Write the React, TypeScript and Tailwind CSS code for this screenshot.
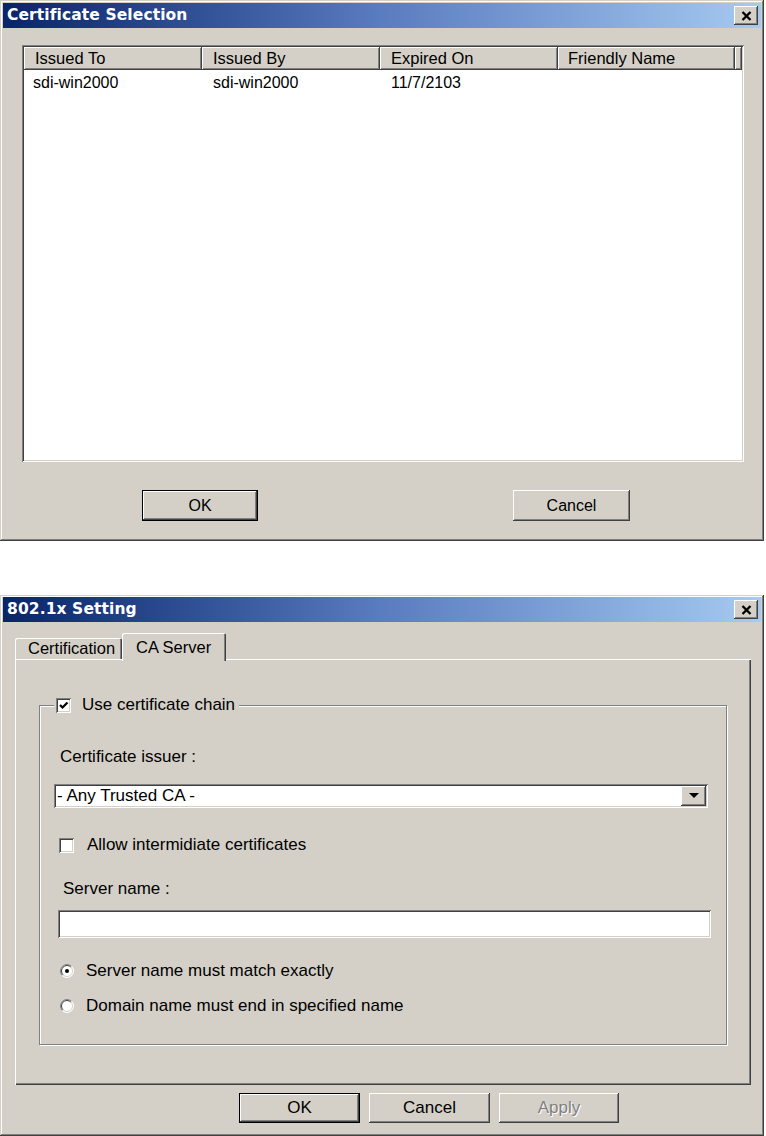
import React from "react";

const RAISED =
  "shadow-[inset_-1px_-1px_0_#404040,inset_1px_1px_0_#ffffff,inset_-2px_-2px_0_#808080,inset_2px_2px_0_#d4d0c8]";
const SUNKEN =
  "shadow-[inset_1px_1px_0_#808080,inset_-1px_-1px_0_#ffffff,inset_2px_2px_0_#404040,inset_-2px_-2px_0_#d4d0c8]";
const WINDOW =
  "shadow-[inset_-1px_-1px_0_#404040,inset_1px_1px_0_#d4d0c8,inset_-2px_-2px_0_#808080,inset_2px_2px_0_#ffffff]";

function CloseX() {
  return (
    <svg width="11" height="10" viewBox="0 0 11 10">
      <path d="M1.5 1 L9.5 9 M9.5 1 L1.5 9" stroke="#000" strokeWidth="2.4" fill="none" />
    </svg>
  );
}

function TitleBar({ title }: { title: string }) {
  return (
    <div className="h-[25px] flex items-center justify-between bg-linear-to-r from-[#0a246a] via-[#5a7cc0] to-[#a6caf0] pl-[4px] pr-[3px]">
      <span className="text-white font-bold text-[15.5px] leading-none font-['DejaVu_Sans',sans-serif] tracking-[0.1px]">
        {title}
      </span>
      <div className={`w-[24px] h-[19px] bg-[#d4d0c8] flex items-center justify-center ${RAISED}`}>
        <CloseX />
      </div>
    </div>
  );
}

function Button({
  label,
  w,
  h,
  def,
  disabled,
}: {
  label: string;
  w: string;
  h: string;
  def?: boolean;
  disabled?: boolean;
}) {
  const inner = (
    <div
      className={`w-full h-full bg-[#d4d0c8] flex items-center justify-center ${RAISED} ${
        disabled ? "text-[#808080] [text-shadow:1px_1px_0_#ffffff]" : "text-black"
      }`}
    >
      {label}
    </div>
  );
  return (
    <div className={`${w} ${h} ${def ? "border border-black" : ""}`}>{inner}</div>
  );
}

function CheckBox({ checked }: { checked?: boolean }) {
  return (
    <div className={`w-[15px] h-[15px] bg-white flex items-center justify-center ${SUNKEN}`}>
      {checked && (
        <svg width="11" height="11" viewBox="0 0 11 11">
          <path d="M2 5 L4.5 7.5 L9.5 2.5" stroke="#000" strokeWidth="2.2" fill="none" />
        </svg>
      )}
    </div>
  );
}

function Radio({ checked }: { checked?: boolean }) {
  return (
    <svg width="14" height="14" viewBox="0 0 14 14">
      <circle cx="7" cy="7" r="6.5" fill="#ffffff" />
      <path d="M2.4 11.6 A6.5 6.5 0 0 1 11.6 2.4" stroke="#808080" strokeWidth="1" fill="none" />
      <path d="M3.1 10.9 A5.5 5.5 0 0 1 10.9 3.1" stroke="#404040" strokeWidth="1" fill="none" />
      <path d="M11.6 2.4 A6.5 6.5 0 0 1 2.4 11.6" stroke="#ffffff" strokeWidth="1" fill="none" />
      <path d="M10.9 3.1 A5.5 5.5 0 0 1 3.1 10.9" stroke="#d4d0c8" strokeWidth="1" fill="none" />
      {checked && <circle cx="7" cy="7" r="2" fill="#000" />}
    </svg>
  );
}

function HeaderCell({ label, w, pl }: { label: string; w: string; pl: string }) {
  return (
    <div className={`${w} h-full bg-[#d4d0c8] flex items-center ${pl} ${RAISED}`}>
      <span>{label}</span>
    </div>
  );
}

function CertificateSelection() {
  return (
    <div
      className={`w-[764px] h-[541px] bg-[#d4d0c8] p-[3px] flex flex-col font-['Liberation_Sans',Arial,sans-serif] text-[16px] text-black ${WINDOW}`}
    >
      <TitleBar title="Certificate Selection" />
      <div className={`mt-[17px] ml-[19px] w-[722px] h-[417px] bg-white p-[2px] flex flex-col ${SUNKEN}`}>
        <div className="h-[23px] flex shrink-0 text-[16.5px]">
          <HeaderCell label="Issued To" w="w-[178px]" pl="pl-[11px]" />
          <HeaderCell label="Issued By" w="w-[178px]" pl="pl-[11px]" />
          <HeaderCell label="Expired On" w="w-[178px]" pl="pl-[11px]" />
          <HeaderCell label="Friendly Name" w="w-[177px]" pl="pl-[10px]" />
          <div className={`flex-1 h-full bg-[#d4d0c8] ${RAISED}`} />
        </div>
        <div className="h-[26px] flex items-center">
          <div className="w-[178px] pl-[9px]">sdi-win2000</div>
          <div className="w-[178px] pl-[11px]">sdi-win2000</div>
          <div className="w-[178px] pl-[11px]">11/7/2103</div>
          <div className="w-[177px]" />
        </div>
      </div>
      <div className="flex mt-[28px]">
        <div className="ml-[139px]">
          <Button label="OK" w="w-[116px]" h="h-[31px]" def />
        </div>
        <div className="ml-[255px]">
          <Button label="Cancel" w="w-[117px]" h="h-[31px]" />
        </div>
      </div>
    </div>
  );
}

function Setting8021x() {
  return (
    <div
      className={`mt-[54px] w-[764px] h-[541px] bg-[#d4d0c8] px-[3px] pt-[2px] flex flex-col font-['Liberation_Sans',Arial,sans-serif] text-[17px] text-black ${WINDOW}`}
    >
      <TitleBar title="802.1x Setting" />
      {/* Tabs */}
      <div className="relative z-10 mt-[11px] ml-[12px] h-[26px] flex items-end text-[16.5px]">
        <div className="w-[107px] h-[21px] bg-[#d4d0c8] rounded-t-[2px] flex items-center pl-[13px] shadow-[inset_1px_1px_0_#ffffff,inset_-1px_0_0_#404040,inset_-2px_0_0_#808080]">
          Certification
        </div>
        <div className="w-[104px] h-[28px] mb-[-2px] bg-[#d4d0c8] rounded-t-[2px] flex items-start pt-[2px] pl-[14px] shadow-[inset_1px_1px_0_#ffffff,inset_-1px_0_0_#404040,inset_-2px_0_0_#808080]">
          CA Server
        </div>
      </div>
      {/* Panel */}
      <div className="ml-[12px] w-[736px] h-[426px] bg-[#d4d0c8] pt-[46px] pl-[24px] shadow-[inset_1px_1px_0_#ffffff,inset_-1px_-1px_0_#404040,inset_-2px_-2px_0_#808080]">
        {/* Group box */}
        <div className="relative w-[688px] h-[340px] flex flex-col shadow-[inset_1px_1px_0_#808080,inset_-1px_-1px_0_#808080,inset_2px_2px_0_#ffffff,1px_1px_0_#ffffff]">
          <div className="absolute left-[15px] top-[-10px] h-[20px] bg-[#d4d0c8] flex items-center pl-[2px] pr-[4px] gap-[11px]">
            <CheckBox checked />
            <span>Use certificate chain</span>
          </div>
          <div className="mt-[42px] ml-[21px] h-[20px] leading-[20px]">Certificate issuer :</div>
          <div className={`mt-[17px] ml-[15px] w-[654px] h-[24px] bg-white p-[2px] flex items-center justify-between ${SUNKEN}`}>
            <span className="pl-[1px]">- Any Trusted CA -</span>
            <div className={`w-[25px] h-[20px] bg-[#d4d0c8] flex items-center justify-center ${RAISED}`}>
              <svg width="10" height="6" viewBox="0 0 10 6">
                <path d="M0 0 H10 L5 5 Z" fill="#000" />
              </svg>
            </div>
          </div>
          <div className="mt-[27px] ml-[20px] h-[20px] flex items-center gap-[13px]">
            <CheckBox />
            <span>Allow intermidiate certificates</span>
          </div>
          <div className="mt-[24px] ml-[24px] h-[20px] leading-[20px]">Server name :</div>
          <div className={`mt-[11px] ml-[19px] w-[653px] h-[28px] bg-white ${SUNKEN}`} />
          <div className="mt-[23px] ml-[21px] h-[20px] flex items-center gap-[12px]">
            <Radio checked />
            <span>Server name must match exactly</span>
          </div>
          <div className="mt-[15px] ml-[21px] h-[20px] flex items-center gap-[12px]">
            <Radio />
            <span>Domain name must end in specified name</span>
          </div>
        </div>
      </div>
      <div className="flex mt-[8px] ml-[236px] gap-[9px]">
        <Button label="OK" w="w-[121px]" h="h-[30px]" def />
        <Button label="Cancel" w="w-[121px]" h="h-[30px]" />
        <Button label="Apply" w="w-[120px]" h="h-[30px]" disabled />
      </div>
    </div>
  );
}

export default function App() {
  return (
    <div className="w-[766px] h-[1136px] bg-white overflow-hidden">
      <CertificateSelection />
      <Setting8021x />
    </div>
  );
}
